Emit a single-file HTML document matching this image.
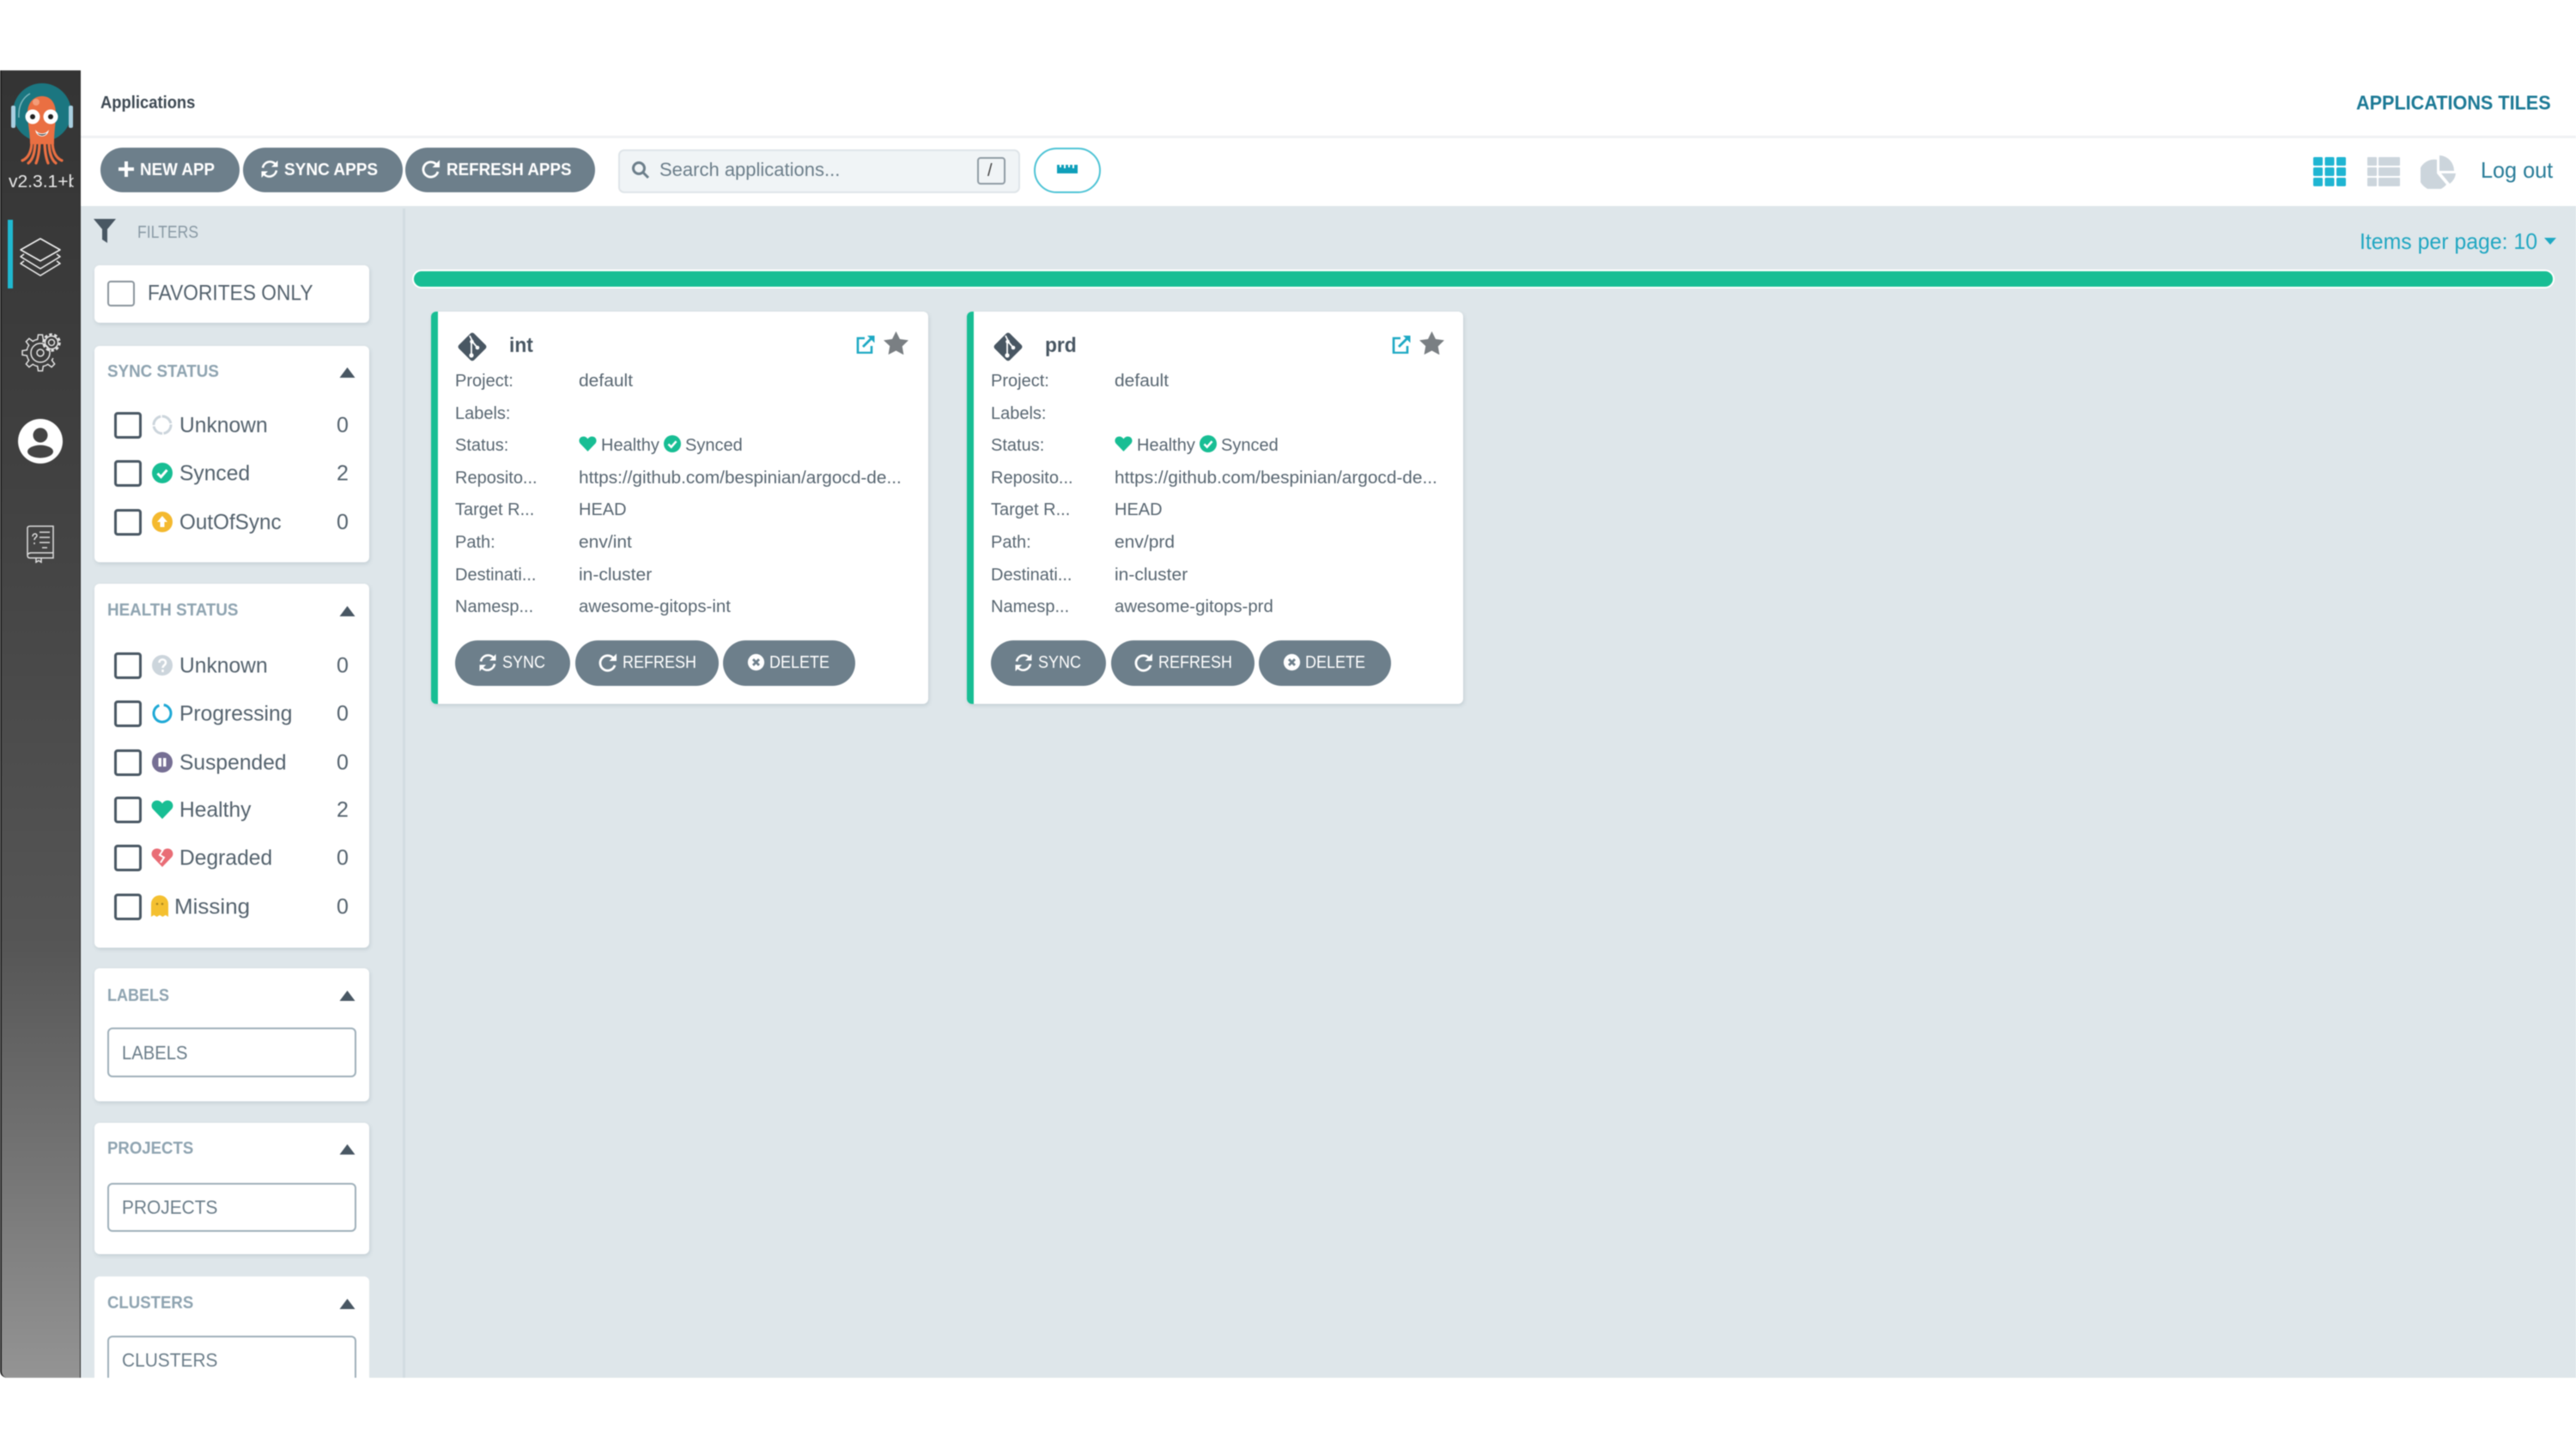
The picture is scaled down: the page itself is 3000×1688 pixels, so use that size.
<!DOCTYPE html>
<html><head><meta charset="utf-8"><title>Applications</title>
<style>
html,body{margin:0;padding:0;background:#fff}
#r{position:relative;width:3000px;height:1688px;overflow:hidden;background:#fff;font-family:"Liberation Sans",sans-serif;color:#495763;filter:blur(.6px)}
#r div,#r span.t,#r svg{position:absolute}
.t{position:absolute;white-space:nowrap;line-height:1;transform-origin:left center;transform:translateY(calc(-50% + 1px)) scaleX(var(--s,1))}
.card{background:#fff;border-radius:6px;box-shadow:1px 2px 4px rgba(120,140,150,.25)}
.btn{background:#6d7f8b;color:#fff;border-radius:27px;height:52px}
.cb{width:26px;height:25px;border:3px solid #495763;border-radius:4px;left:133px;margin-top:-1px}
.lb{left:209px;font-size:25px;color:#55636e;--s:.985}
.ct{left:392px;font-size:25px;color:#55636e}
.ti{left:125px;font-size:20px;font-weight:bold;color:#8fa4b1;--s:.94}
.inp{left:125px;width:290px;background:#fff;border:2px solid #9fb0ba;border-radius:6px;box-sizing:border-box}
.ph{left:142px;font-size:22px;color:#6d7f8b;--s:.97}
.k{font-size:20px;color:#596772}
.v{font-size:20px;color:#596772;--s:1.02}
.bt{font-size:20px;color:#fff;--s:.9}
</style></head><body><div id="r">
<svg width="0" height="0" style="left:0;top:0"><defs>
<symbol id="caret" viewBox="0 0 18 12"><path d="M9 0L18 12H0z" fill="#495763"/></symbol>
<symbol id="sync" viewBox="0 0 24 24"><g fill="none" stroke="#fff" stroke-width="2.6"><path d="M4 10.5A8.5 8.5 0 0 1 18.5 6"/><path d="M20 13.5A8.5 8.5 0 0 1 5.5 18"/></g><path d="M21.5 2v7.5H14zM2.5 22v-7.5H10z" fill="#fff"/></symbol>
<symbol id="redo" viewBox="0 0 24 24"><path d="M18 6.5A8.7 8.7 0 1 0 20 15" fill="none" stroke="#fff" stroke-width="2.8"/><path d="M22 1.5V10h-8.5z" fill="#fff"/></symbol>
<symbol id="x" viewBox="0 0 24 24"><circle cx="12" cy="12" r="11" fill="#fff"/><path d="M8 8l8 8M16 8l-8 8" stroke="#6d7f8b" stroke-width="3.2"/></symbol>
<symbol id="heart" viewBox="0 0 26 24"><path d="M13 23L2 11.5C-1 8 .8 1.5 7 1.5c3 0 5 2 6 3.6 1-1.6 3-3.6 6-3.6 6.2 0 8 6.5 5 10z" fill="#18be94"/></symbol>
<symbol id="ok" viewBox="0 0 24 24"><circle cx="12" cy="12" r="12" fill="#18be94"/><path d="M6.5 12.5l4 4 7-8" fill="none" stroke="#fff" stroke-width="3"/></symbol>
<symbol id="git" viewBox="0 0 38 38"><rect x="6.5" y="6.5" width="25" height="25" rx="3" fill="#495763" transform="rotate(45 19 19)"/><path d="M16 6l4.500 9M18 15v14M20 14l5 6" stroke="#fff" stroke-width="1.800" fill="none"/><circle cx="18" cy="29" r="2.600" fill="#fff"/><circle cx="25" cy="20" r="2.300" fill="#fff"/><circle cx="18.500" cy="13" r="2.300" fill="#fff"/></symbol>
<symbol id="star" viewBox="0 0 30 28"><path d="M15 0l4.600 9.300 10.400 1.500-7.500 7.300 1.800 10.300L15 23.300l-9.300 4.800 1.800-10.300L0 10.800l10.400-1.500z" fill="#7a7f83"/></symbol>
<symbol id="ext" viewBox="0 0 22 22"><path d="M10 4H2v17h16v-8" fill="none" stroke="#1fa9c4" stroke-width="2.600"/><path d="M8 14L19 3" stroke="#1fa9c4" stroke-width="2.800"/><path d="M13 1h8.500v8.500z" fill="#1fa9c4"/></symbol>
<path id="tooth" d="M14.8 -6.100A16 16 0 0 1 15.650 -3.300L21 -2.500V2.500L15.650 3.300A16 16 0 0 1 14.800 6.100"/>
</defs></svg>

<!-- sidebar -->
<div style="left:0;top:82px;width:94px;height:1523px;background:linear-gradient(#343434 0%,#3e3e3e 25%,#464646 40%,#565656 67%,#777 85%,#949494 100%);border-right:1px solid #2c2c2c;box-sizing:border-box;border-left:2px solid #222;border-bottom-left-radius:8px"></div>
<svg style="left:8px;top:92px" width="80" height="105" viewBox="0 0 80 105">
<circle cx="41" cy="39" r="34" fill="#1b7680"/>
<rect x="5" y="31" width="5" height="26" rx="2" fill="#a9cfe0"/><rect x="72" y="31" width="5" height="26" rx="2" fill="#a9cfe0"/>
<path d="M14 45C13 32 18 22 27 17" fill="none" stroke="#7fb7bd" stroke-width="1.500"/>
<path d="M24 40C24 28 31 20 41 20C51 20 57 28 57 40C57 52 55 60 55 76H27C27 60 24 52 24 40Z" fill="#ea6f42"/>
<g fill="none" stroke="#ea6f42" stroke-width="3.200" stroke-linecap="round"><path d="M29 72C29 84 25 92 18 95"/><path d="M33 72C33 86 30 94 25 98"/><path d="M38 72C38 85 36 93 34 98"/><path d="M44 72C44 85 46 93 48 98"/><path d="M49 72C49 86 52 94 57 98"/><path d="M53 72C53 84 57 92 64 95"/></g>
<circle cx="30" cy="44" r="8.500" fill="#fff"/><circle cx="51" cy="44" r="8.500" fill="#fff"/><circle cx="30" cy="44" r="3" fill="#222"/><circle cx="51" cy="44" r="3" fill="#222"/>
<path d="M34 61c4 4 10 4 14 0c-2 7-12 7-14 0z" fill="#222" stroke="#fff" stroke-width="1"/>
<circle cx="34" cy="27" r="4" fill="#f39c78"/>
</svg>
<span class="t" style="left:10px;top:211px;width:72px;overflow:hidden;font-size:20px;color:#e8e8e8;line-height:24px;--s:1.05">v2.3.1+b</span>
<div style="left:9px;top:256px;width:6px;height:80px;background:#1fb8d0"></div>
<svg style="left:22px;top:275px" width="50" height="50" viewBox="0 0 50 50" fill="none" stroke="#eee" stroke-width="1.600" stroke-linejoin="round"><path d="M25 3L48 16 25 29 2 16z"/><path d="M6 21L2 24l23 14 23-14-4-3"/><path d="M6 29L2 32l23 14 23-14-4-3"/></svg>
<svg style="left:24px;top:388px" width="50" height="50" viewBox="0 0 50 50" fill="none" stroke="#e2e2e2" stroke-width="1.500">
<g transform="translate(23 23)"><use href="#tooth" transform="rotate(45)"/><use href="#tooth" transform="rotate(90)"/><use href="#tooth" transform="rotate(135)"/><use href="#tooth" transform="rotate(180)"/><use href="#tooth" transform="rotate(225)"/><use href="#tooth" transform="rotate(270)"/></g>
<circle cx="23" cy="23" r="11"/><circle cx="23" cy="23" r="4"/>
<g transform="translate(36 11)"><circle r="3.500"/><circle r="7.500"/><circle r="9.500" stroke-width="2.500" stroke-dasharray="3.500 2.460"/></g>
</svg>
<svg style="left:21px;top:488px" width="52" height="52" viewBox="0 0 52 52"><circle cx="26" cy="26" r="26" fill="#fff"/><circle cx="26" cy="19" r="8.500" fill="#444"/><ellipse cx="26" cy="38" rx="15" ry="7.500" fill="#444"/></svg>
<svg style="left:31px;top:610px" width="34" height="46" viewBox="0 0 34 46" fill="none" stroke="#ddd" stroke-width="1.500"><path d="M4 3h27v37H4c-2 0-3-1-3-3V5c0-1 1-2 3-2zM1 36c1-1 2-2 4-2h26M11 40v5l3-2 3 2v-5"/><path d="M15 10h12M15 16h12M15 22h12M18 28h6M7 15c0-4 5-4 5-1 0 2-3 2-3 5M9 22v2"/></svg>

<!-- header -->
<span class="t" style="left:117px;top:119px;font-size:20px;font-weight:bold;color:#3f4a54;--s:.92">Applications</span>
<span class="t" style="left:2744px;top:119px;font-size:23.500px;font-weight:bold;color:#1d7a96;--s:.92">APPLICATIONS TILES</span>
<div style="left:94px;top:158px;width:2906px;height:3px;background:#f0f2f4"></div>
<div style="left:94px;top:240px;width:2906px;height:1365px;background:#dee6ea"></div>
<div style="left:469px;top:243px;width:3px;height:1362px;background:#d2dce1"></div>

<!-- toolbar -->
<div class="btn" style="left:117px;top:172px;width:162px"></div>
<svg style="left:137px;top:187px" width="20" height="20" viewBox="0 0 20 20"><path d="M10 1v18M1 10h18" stroke="#fff" stroke-width="4"/></svg>
<span class="t" style="left:163px;top:197px;font-size:20px;font-weight:bold;color:#fff;--s:.94">NEW APP</span>
<div class="btn" style="left:283px;top:172px;width:186px"></div>
<svg style="left:302px;top:185px" width="24" height="24"><use href="#sync"/></svg>
<span class="t" style="left:331px;top:197px;font-size:20px;font-weight:bold;color:#fff;--s:.95">SYNC APPS</span>
<div class="btn" style="left:472px;top:172px;width:221px"></div>
<svg style="left:490px;top:185px" width="24" height="24"><use href="#redo"/></svg>
<span class="t" style="left:520px;top:197px;font-size:20px;font-weight:bold;color:#fff;--s:.94">REFRESH APPS</span>
<div style="left:720px;top:174px;width:468px;height:51px;box-sizing:border-box;background:#f0f4f6;border:2px solid #dfe5e9;border-radius:7px"></div>
<svg style="left:735px;top:187px" width="22" height="22" viewBox="0 0 22 22" fill="none" stroke="#6d7f8b" stroke-width="3"><circle cx="9" cy="9" r="6.500"/><path d="M14 14l6 6"/></svg>
<span class="t" style="left:768px;top:197px;font-size:22px;color:#6d7f8b">Search applications...</span>
<div style="left:1138px;top:183px;width:33px;height:32px;box-sizing:border-box;background:#f0f4f6;border:2px solid #8f9ba4;border-radius:4px"></div>
<span class="t" style="left:1150px;top:198px;font-size:20px;color:#444">/</span>
<div style="left:1204px;top:172px;width:78px;height:53px;box-sizing:border-box;background:#fff;border:2px solid #4dc3d5;border-radius:27px"></div>
<svg style="left:1231px;top:192px" width="24" height="10" viewBox="0 0 24 10"><path d="M0 0h3v3h2V0h3v4h2V0h3v3h2V0h3v4h2V0h4v10H0z" fill="#0f9fba"/></svg>
<svg style="left:2694px;top:183px" width="38" height="34" viewBox="0 0 38 34" fill="#1fb5d2"><rect width="11" height="10" rx="1.500"/><rect x="13.500" width="11" height="10" rx="1.500"/><rect x="27" width="11" height="10" rx="1.500"/><rect y="12" width="11" height="10" rx="1.500"/><rect x="13.500" y="12" width="11" height="10" rx="1.500"/><rect x="27" y="12" width="11" height="10" rx="1.500"/><rect y="24" width="11" height="10" rx="1.500"/><rect x="13.500" y="24" width="11" height="10" rx="1.500"/><rect x="27" y="24" width="11" height="10" rx="1.500"/></svg>
<svg style="left:2757px;top:183px" width="38" height="34" viewBox="0 0 38 34" fill="#ccd5dc"><rect width="11" height="10" rx="1"/><rect x="13" width="25" height="10" rx="1"/><rect y="12" width="11" height="10" rx="1"/><rect x="13" y="12" width="25" height="10" rx="1"/><rect y="24" width="11" height="10" rx="1"/><rect x="13" y="24" width="25" height="10" rx="1"/></svg>
<svg style="left:2819px;top:181px" width="42" height="39" viewBox="0 0 42 39" fill="#ccd5dc"><path d="M19 5V21L30 34A18 18 0 1 1 19 5Z"/><path d="M22 0A18 18 0 0 1 39 18H22Z"/><path d="M24 21H41A18 18 0 0 1 34 33Z"/></svg>
<span class="t" style="left:2889px;top:197px;font-size:26px;color:#2a7d99;--s:.97">Log out</span>
<span class="t" style="left:2748px;top:280px;font-size:26px;color:#22a7c2;--s:.955">Items per page: 10</span>
<svg style="left:2963px;top:277px" width="14" height="8" viewBox="0 0 14 8"><path d="M0 0h14L7 8z" fill="#1fa9c4"/></svg>
<div style="left:480px;top:314px;width:2495px;height:22px;box-sizing:border-box;background:#18be94;border:2px solid #fff;border-radius:11px"></div>

<!-- filters -->
<svg style="left:109px;top:255px" width="26" height="28" viewBox="0 0 26 28"><path d="M0 0h26L16 12v16l-6-4V12z" fill="#495763"/></svg>
<span class="t" style="left:160px;top:270px;font-size:20px;color:#8a9aa5;--s:.88">FILTERS</span>

<div class="card" style="left:110px;top:309px;width:320px;height:67px"></div>
<div style="left:125px;top:327px;width:32px;height:30px;box-sizing:border-box;border:2px solid #8a949c;border-radius:4px"></div>
<span class="t" style="left:172px;top:341px;font-size:25px;color:#55636e;--s:.91">FAVORITES ONLY</span>

<div class="card" style="left:110px;top:403px;width:320px;height:252px"></div>
<span class="t ti" style="top:432px">SYNC STATUS</span>
<svg style="left:395px;top:428px" width="19" height="12"><use href="#caret"/></svg>
<div class="cb" style="top:481px"></div><span class="t lb" style="top:495px">Unknown</span><span class="t ct" style="top:495px">0</span>
<svg style="left:177px;top:483px" width="24" height="24" viewBox="0 0 24 24"><circle cx="12" cy="12" r="10" fill="none" stroke="#ccd5dc" stroke-width="3" stroke-dasharray="14 1.500"/></svg>
<div class="cb" style="top:537px"></div><span class="t lb" style="top:551px">Synced</span><span class="t ct" style="top:551px">2</span>
<svg style="left:177px;top:539px" width="24" height="24"><use href="#ok"/></svg>
<div class="cb" style="top:594px"></div><span class="t lb" style="top:608px;--s:.97">OutOfSync</span><span class="t ct" style="top:608px">0</span>
<svg style="left:177px;top:596px" width="24" height="24" viewBox="0 0 24 24"><circle cx="12" cy="12" r="12" fill="#f4b92f"/><path d="M12 5l6 7h-3.500v6h-5v-6H6z" fill="#fff"/></svg>

<div class="card" style="left:110px;top:680px;width:320px;height:424px"></div>
<span class="t ti" style="top:710px">HEALTH STATUS</span>
<svg style="left:395px;top:706px" width="19" height="12"><use href="#caret"/></svg>
<div class="cb" style="top:761px"></div><span class="t lb" style="top:775px">Unknown</span><span class="t ct" style="top:775px">0</span>
<svg style="left:177px;top:763px" width="24" height="24" viewBox="0 0 24 24"><circle cx="12" cy="12" r="12" fill="#ccd5dc"/><path d="M8.500 9c0-5 7.500-5 7.500 0 0 3-3.500 3-3.500 6M12.500 17v3" fill="none" stroke="#fff" stroke-width="2.500"/></svg>
<div class="cb" style="top:817px"></div><span class="t lb" style="top:831px">Progressing</span><span class="t ct" style="top:831px">0</span>
<svg style="left:177px;top:819px" width="24" height="24" viewBox="0 0 24 24"><circle cx="12" cy="12" r="10" fill="none" stroke="#1fa9d6" stroke-width="3" stroke-dasharray="57 6" transform="rotate(-80 12 12)"/></svg>
<div class="cb" style="top:874px"></div><span class="t lb" style="top:888px">Suspended</span><span class="t ct" style="top:888px">0</span>
<svg style="left:177px;top:876px" width="24" height="24" viewBox="0 0 24 24"><circle cx="12" cy="12" r="12" fill="#766f94"/><path d="M7.500 7h3.500v10H7.500zM13 7h3.500v10H13z" fill="#fff"/></svg>
<div class="cb" style="top:929px"></div><span class="t lb" style="top:943px">Healthy</span><span class="t ct" style="top:943px">2</span>
<svg style="left:176px;top:931px" width="26" height="24"><use href="#heart"/></svg>
<div class="cb" style="top:985px"></div><span class="t lb" style="top:999px">Degraded</span><span class="t ct" style="top:999px">0</span>
<svg style="left:176px;top:987px" width="26" height="24" viewBox="0 0 26 24"><path d="M13 23L2 11.500C-1 8 .8 1.500 7 1.500c3 0 5 2 6 3.600 1-1.600 3-3.600 6-3.600 6.200 0 8 6.500 5 10z" fill="#e96d76"/><path d="M14 3l-4 6 5 3-4 6" fill="none" stroke="#fff" stroke-width="2"/></svg>
<div class="cb" style="top:1042px"></div><span class="t lb" style="top:1056px;left:203px;--s:1.04">Missing</span><span class="t ct" style="top:1056px">0</span>
<svg style="left:176px;top:1043px" width="20" height="25" viewBox="0 0 20 25"><path d="M0 10a10 10 0 0 1 20 0v15l-3.300-2-3.300 2-3.400-2-3.400 2-3.300-2L0 25z" fill="#f4c030"/><circle cx="7" cy="10" r="1.300" fill="#a88420"/><circle cx="13" cy="10" r="1.300" fill="#a88420"/></svg>

<div class="card" style="left:110px;top:1128px;width:320px;height:155px"></div>
<span class="t ti" style="top:1159px;--s:.9">LABELS</span>
<svg style="left:395px;top:1154px" width="19" height="12"><use href="#caret"/></svg>
<div class="inp" style="top:1197px;height:58px"></div><span class="t ph" style="top:1226px;--s:.92">LABELS</span>

<div class="card" style="left:110px;top:1308px;width:320px;height:153px"></div>
<span class="t ti" style="top:1337px;--s:.93">PROJECTS</span>
<svg style="left:395px;top:1333px" width="19" height="12"><use href="#caret"/></svg>
<div class="inp" style="top:1378px;height:57px"></div><span class="t ph" style="top:1406px;--s:.95">PROJECTS</span>

<div style="left:110px;top:1487px;width:320px;height:118px;background:#fff;border-radius:6px 6px 0 0;overflow:hidden"></div>
<span class="t ti" style="top:1517px;--s:.93">CLUSTERS</span>
<svg style="left:395px;top:1513px" width="19" height="12"><use href="#caret"/></svg>
<div style="left:125px;top:1556px;width:290px;height:49px;box-sizing:border-box;border:2px solid #9fb0ba;border-bottom:0;border-radius:6px 6px 0 0"></div><span class="t ph" style="top:1584px;--s:.95">CLUSTERS</span>

<!-- card int -->
<div class="card" style="left:502px;top:363px;width:579px;height:457px"></div>
<div style="left:502px;top:363px;width:8px;height:457px;background:#18be94;border-radius:6px 0 0 6px"></div>
<svg style="left:531px;top:385px" width="38" height="38"><use href="#git"/></svg>
<span class="t" style="left:593px;top:402px;font-size:24px;font-weight:bold;color:#495763;--s:.95">int</span>
<svg style="left:997px;top:390px" width="22" height="22"><use href="#ext"/></svg>
<svg style="left:1029px;top:386px" width="29" height="27"><use href="#star"/></svg>
<span class="t k" style="left:530px;top:443px">Project:</span><span class="t v" style="left:674px;top:443px;--s:1.05">default</span>
<span class="t k" style="left:530px;top:481px">Labels:</span>
<span class="t k" style="left:530px;top:518px">Status:</span>
<svg style="left:674px;top:507px" width="21" height="20"><use href="#heart"/></svg><span class="t k" style="left:700px;top:518px">Healthy</span>
<svg style="left:773px;top:507px" width="20" height="20"><use href="#ok"/></svg><span class="t k" style="left:798px;top:518px">Synced</span>
<span class="t k" style="left:530px;top:556px">Reposito...</span><span class="t v" style="left:674px;top:556px;--s:1.04">https://github.com/bespinian/argocd-de...</span>
<span class="t k" style="left:530px;top:593px">Target R...</span><span class="t k" style="left:674px;top:593px">HEAD</span>
<span class="t k" style="left:530px;top:631px">Path:</span><span class="t v" style="left:674px;top:631px;--s:1.05">env/int</span>
<span class="t k" style="left:530px;top:669px">Destinati...</span><span class="t v" style="left:674px;top:669px;--s:1.05">in-cluster</span>
<span class="t k" style="left:530px;top:706px">Namesp...</span><span class="t v" style="left:674px;top:706px">awesome-gitops-int</span>
<div class="btn" style="left:530px;top:746px;width:134px;height:53px"></div>
<svg style="left:556px;top:760px" width="24" height="24"><use href="#sync"/></svg><span class="t bt" style="left:585px;top:771px">SYNC</span>
<div class="btn" style="left:670px;top:746px;width:167px;height:53px"></div>
<svg style="left:696px;top:760px" width="24" height="24"><use href="#redo"/></svg><span class="t bt" style="left:725px;top:771px">REFRESH</span>
<div class="btn" style="left:842px;top:746px;width:154px;height:53px"></div>
<svg style="left:870px;top:761px" width="21" height="21"><use href="#x"/></svg><span class="t bt" style="left:896px;top:771px">DELETE</span>

<!-- card prd -->
<div class="card" style="left:1126px;top:363px;width:578px;height:457px"></div>
<div style="left:1126px;top:363px;width:8px;height:457px;background:#18be94;border-radius:6px 0 0 6px"></div>
<svg style="left:1155px;top:385px" width="38" height="38"><use href="#git"/></svg>
<span class="t" style="left:1217px;top:402px;font-size:24px;font-weight:bold;color:#495763;--s:.95">prd</span>
<svg style="left:1621px;top:390px" width="22" height="22"><use href="#ext"/></svg>
<svg style="left:1653px;top:386px" width="29" height="27"><use href="#star"/></svg>
<span class="t k" style="left:1154px;top:443px">Project:</span><span class="t v" style="left:1298px;top:443px;--s:1.05">default</span>
<span class="t k" style="left:1154px;top:481px">Labels:</span>
<span class="t k" style="left:1154px;top:518px">Status:</span>
<svg style="left:1298px;top:507px" width="21" height="20"><use href="#heart"/></svg><span class="t k" style="left:1324px;top:518px">Healthy</span>
<svg style="left:1397px;top:507px" width="20" height="20"><use href="#ok"/></svg><span class="t k" style="left:1422px;top:518px">Synced</span>
<span class="t k" style="left:1154px;top:556px">Reposito...</span><span class="t v" style="left:1298px;top:556px;--s:1.04">https://github.com/bespinian/argocd-de...</span>
<span class="t k" style="left:1154px;top:593px">Target R...</span><span class="t k" style="left:1298px;top:593px">HEAD</span>
<span class="t k" style="left:1154px;top:631px">Path:</span><span class="t v" style="left:1298px;top:631px;--s:1.05">env/prd</span>
<span class="t k" style="left:1154px;top:669px">Destinati...</span><span class="t v" style="left:1298px;top:669px;--s:1.05">in-cluster</span>
<span class="t k" style="left:1154px;top:706px">Namesp...</span><span class="t v" style="left:1298px;top:706px">awesome-gitops-prd</span>
<div class="btn" style="left:1154px;top:746px;width:134px;height:53px"></div>
<svg style="left:1180px;top:760px" width="24" height="24"><use href="#sync"/></svg><span class="t bt" style="left:1209px;top:771px">SYNC</span>
<div class="btn" style="left:1294px;top:746px;width:167px;height:53px"></div>
<svg style="left:1320px;top:760px" width="24" height="24"><use href="#redo"/></svg><span class="t bt" style="left:1349px;top:771px">REFRESH</span>
<div class="btn" style="left:1466px;top:746px;width:154px;height:53px"></div>
<svg style="left:1494px;top:761px" width="21" height="21"><use href="#x"/></svg><span class="t bt" style="left:1520px;top:771px">DELETE</span>
</div></body></html>
